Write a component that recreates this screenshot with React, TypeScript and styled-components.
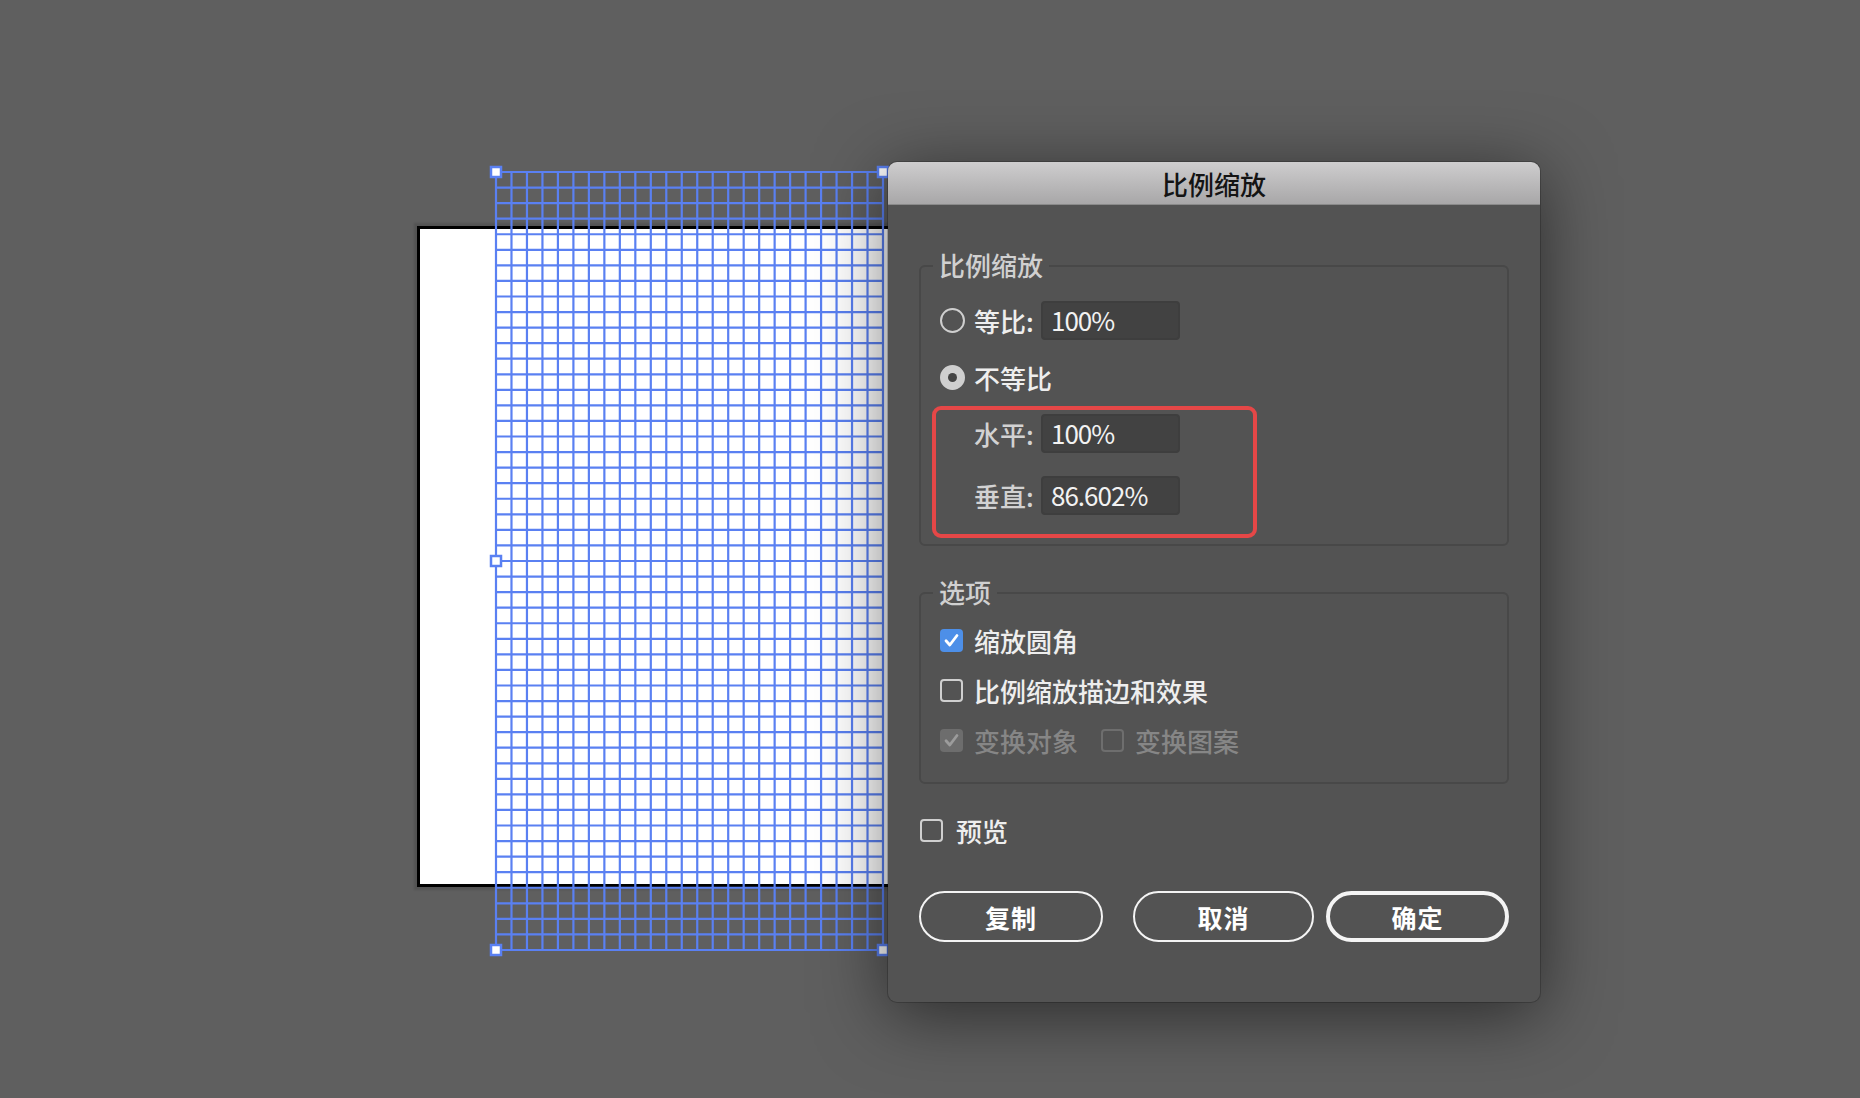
import React from 'react';
import styled, { createGlobalStyle } from 'styled-components';

const GlobalStyle = createGlobalStyle`
  html, body {
    margin: 0;
    padding: 0;
    background: #5f5f5f;
  }
  body {
    width: 1860px;
    height: 1098px;
    overflow: hidden;
    font-family: "Noto Sans CJK SC", "Noto Sans", sans-serif;
  }
`;

const FONT = `"Noto Sans CJK SC", "Noto Sans", sans-serif`;

// ---------- canvas ----------

const Workspace = styled.div`
  position: relative;
  width: 1860px;
  height: 1098px;
  background: #5f5f5f;
  overflow: hidden;
`;

const Artboard = styled.div`
  position: absolute;
  left: 417px;
  top: 226px;
  width: 620px;
  height: 661px;
  box-sizing: border-box;
  background: #ffffff;
  border: 3px solid #000000;
  box-shadow: 0 0 2px 3px rgba(0, 0, 0, 0.12);
`;

const GridSvg = styled.svg`
  position: absolute;
  left: 489px;
  top: 165px;
  overflow: visible;
`;

const GRID_W = 387;
const GRID_H = 778;
const COLS = 25;
const ROWS = 50;
const PAD = 7;
const BLUE = '#5a80f2';

function SelectionGrid() {
  const cols = Array.from({ length: COLS + 1 }, (_, i) => PAD + (i * GRID_W) / COLS);
  const rows = Array.from({ length: ROWS + 1 }, (_, i) => PAD + (i * GRID_H) / ROWS);
  const handles = [
    [0, 0],
    [GRID_W, 0],
    [0, GRID_H / 2],
    [0, GRID_H],
    [GRID_W, GRID_H],
  ];
  return (
    <GridSvg width={GRID_W + PAD * 2} height={GRID_H + PAD * 2}>
      {cols.map((x, i) => (
        <line key={'c' + i} x1={x} y1={PAD} x2={x} y2={PAD + GRID_H} stroke={BLUE} strokeWidth={2.2} />
      ))}
      {rows.map((y, i) => (
        <line key={'r' + i} x1={PAD} y1={y} x2={PAD + GRID_W} y2={y} stroke={BLUE} strokeWidth={2.2} />
      ))}
      {handles.map(([x, y], i) => (
        <rect
          key={'h' + i}
          x={PAD + x - 5}
          y={PAD + y - 5}
          width={10}
          height={10}
          fill="#ffffff"
          stroke={BLUE}
          strokeWidth={2.5}
        />
      ))}
    </GridSvg>
  );
}

// ---------- dialog ----------

const Dialog = styled.div`
  position: absolute;
  left: 888px;
  top: 162px;
  width: 652px;
  background: #535353;
  border-radius: 9px;
  overflow: hidden;
  box-shadow: 0 12px 70px rgba(0, 0, 0, 0.55), 0 0 0 1px rgba(0, 0, 0, 0.2);
`;

const TitleBar = styled.div`
  height: 43px;
  box-sizing: border-box;
  background: linear-gradient(#cecdce, #a8a7a8);
  border-bottom: 1px solid #8a8a8a;
  display: flex;
  align-items: center;
  justify-content: center;
  font-family: ${FONT};
  font-size: 26px;
  font-weight: 500;
  color: #141414;
`;

const Body = styled.div`
  display: flex;
  flex-direction: column;
  padding: 60px 31px 60px;
`;

const Group = styled.div<{ $mt?: number; $pb: number }>`
  display: flex;
  flex-direction: column;
  margin-top: ${(p) => p.$mt ?? 0}px;
  padding: 0 0 ${(p) => p.$pb}px 19px;
  border: 2px solid #484848;
  border-radius: 6px;
`;

const Legend = styled.div`
  align-self: flex-start;
  height: 32px;
  line-height: 32px;
  margin: -18px 0 0 -7px;
  padding: 0 6px;
  background: #535353;
  font-family: ${FONT};
  font-size: 26px;
  font-weight: 500;
  color: #d0d0d0;
`;

const Row = styled.div<{ $mt?: number; $h?: number; $ml?: number }>`
  display: flex;
  align-items: center;
  height: ${(p) => p.$h ?? 40}px;
  margin-top: ${(p) => p.$mt ?? 0}px;
  margin-left: ${(p) => p.$ml ?? 0}px;
`;

const Radio = styled.span<{ $checked?: boolean }>`
  width: 25px;
  height: 25px;
  box-sizing: border-box;
  border-radius: 50%;
  flex-shrink: 0;
  margin-right: 9px;
  border: 2px solid #cfcfcf;
  background: ${(p) => (p.$checked ? '#cfcfcf' : 'transparent')};
  display: flex;
  align-items: center;
  justify-content: center;

  &::after {
    content: '';
    display: ${(p) => (p.$checked ? 'block' : 'none')};
    width: 9px;
    height: 9px;
    border-radius: 50%;
    background: #444444;
  }
`;

const Label = styled.span<{ $w?: number; $color?: string }>`
  font-family: ${FONT};
  font-size: 26px;
  font-weight: 500;
  color: ${(p) => p.$color ?? '#eeeeee'};
  white-space: nowrap;
  ${(p) => (p.$w ? `width: ${p.$w}px;` : '')}
`;

const Field = styled.input`
  width: 139px;
  height: 39px;
  box-sizing: border-box;
  margin: 0;
  padding: 0 0 2px 8px;
  border: 2px solid #3e3e3e;
  border-radius: 4px;
  background: #424242;
  color: #f2f2f2;
  font-family: ${FONT};
  font-size: 26px;
  letter-spacing: -1px;
  outline: none;
`;

const Highlight = styled.div`
  align-self: flex-start;
  display: flex;
  flex-direction: column;
  width: 325px;
  box-sizing: border-box;
  margin: 9px 0 0 -8px;
  padding: 3px 0 19px 38px;
  border: 4px solid #e54747;
  border-radius: 9px;
`;

const Box = styled.span<{ $checked?: boolean; $disabled?: boolean; $mr?: number }>`
  width: 23px;
  height: 23px;
  box-sizing: border-box;
  flex-shrink: 0;
  margin-right: ${(p) => p.$mr ?? 11}px;
  border-radius: 4px;
  display: flex;
  align-items: center;
  justify-content: center;
  border: ${(p) =>
    p.$checked ? 'none' : `2px solid ${p.$disabled ? '#6e6e6e' : '#cfcfcf'}`};
  background: ${(p) => (!p.$checked ? 'transparent' : p.$disabled ? '#6d6d6d' : '#4d8fe8')};
`;

function Checkbox({ checked, disabled, mr }: { checked?: boolean; disabled?: boolean; mr?: number }) {
  return (
    <Box $checked={checked} $disabled={disabled} $mr={mr}>
      {checked && (
        <svg width="23" height="23" viewBox="0 0 23 23">
          <path
            d="M6 11.8 L9.8 16 L17 6.5"
            fill="none"
            stroke={disabled ? '#9c9c9c' : '#ffffff'}
            strokeWidth={2.8}
            strokeLinecap="round"
            strokeLinejoin="round"
          />
        </svg>
      )}
    </Box>
  );
}

const ButtonRow = styled.div`
  display: flex;
  justify-content: space-between;
  margin-top: 43px;
`;

const ButtonGroup = styled.div`
  display: flex;
  gap: 12px;
`;

const PillButton = styled.button<{ $w: number; $primary?: boolean }>`
  width: ${(p) => p.$w}px;
  height: 51px;
  box-sizing: border-box;
  padding: 0;
  border-radius: 26px;
  border: ${(p) => (p.$primary ? 4 : 2.5)}px solid #f4f4f4;
  background: transparent;
  color: #ffffff;
  font-family: ${FONT};
  font-size: 25px;
  font-weight: 700;
  letter-spacing: 1px;
`;

const DISABLED = '#868686';

export default function App() {
  return (
    <>
      <GlobalStyle />
      <Workspace>
        <Artboard />
        <SelectionGrid />
        <Dialog>
          <TitleBar>比例缩放</TitleBar>
          <Body>
            <Group $pb={6}>
              <Legend>比例缩放</Legend>
              <Row $mt={19}>
                <Radio />
                <Label $w={67}>等比:</Label>
                <Field value="100%" readOnly />
              </Row>
              <Row $mt={17}>
                <Radio $checked />
                <Label>不等比</Label>
              </Row>
              <Highlight>
                <Row>
                  <Label $w={67} $color="#d2d2d2">
                    水平:
                  </Label>
                  <Field value="100%" readOnly />
                </Row>
                <Row $mt={22}>
                  <Label $w={67} $color="#d2d2d2">
                    垂直:
                  </Label>
                  <Field value="86.602%" readOnly />
                </Row>
              </Highlight>
            </Group>

            <Group $mt={46} $pb={24}>
              <Legend>选项</Legend>
              <Row $mt={14} $h={36}>
                <Checkbox checked />
                <Label>缩放圆角</Label>
              </Row>
              <Row $mt={14} $h={36}>
                <Checkbox />
                <Label>比例缩放描边和效果</Label>
              </Row>
              <Row $mt={14} $h={36}>
                <Checkbox checked disabled />
                <Label $color={DISABLED} $w={127}>
                  变换对象
                </Label>
                <Checkbox disabled />
                <Label $color={DISABLED}>变换图案</Label>
              </Row>
            </Group>

            <Row $mt={28} $h={36} $ml={1}>
              <Checkbox mr={13} />
              <Label>预览</Label>
            </Row>

            <ButtonRow>
              <PillButton $w={184}>复制</PillButton>
              <ButtonGroup>
                <PillButton $w={181}>取消</PillButton>
                <PillButton $w={183} $primary>
                  确定
                </PillButton>
              </ButtonGroup>
            </ButtonRow>
          </Body>
        </Dialog>
      </Workspace>
    </>
  );
}
